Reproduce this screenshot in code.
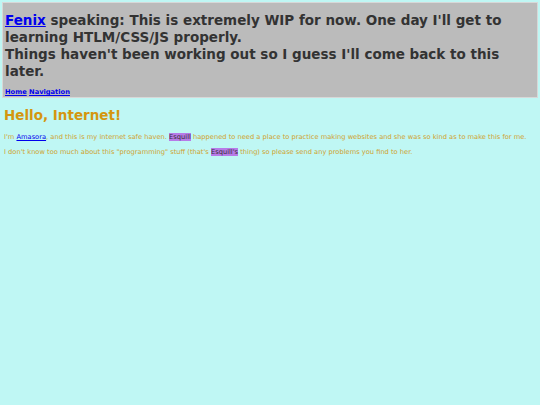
export default function App() {
  return (
    <div className="min-h-[405px] bg-[#bff7f4] p-[2px] font-['DejaVu_Sans',Verdana,sans-serif]">
      <header className="border border-[#d8d8d8] bg-[#bbbbbb] px-[2px] pt-[9px] pb-[1px]">
        <h1 className="text-[13.5px] leading-[17px] font-bold text-[#333333]">
          <a href="#" className="text-[#0000ee] underline">Fenix</a> speaking: This is extremely WIP for now. One day I'll get to learning HTLM/CSS/JS properly.
          <br />
          Things haven't been working out so I guess I'll come back to this later.
        </h1>
        <nav className="mt-[8px] text-[6.7px] leading-[8px] font-bold">
          <a href="#" className="text-[#0000ee] underline">Home</a>{" "}
          <a href="#" className="text-[#0000ee] underline">Navigation</a>
        </nav>
      </header>
      <main className="px-[2px] text-[#d0a22e]">
        <h2 className="mt-[9px] text-[13.5px] leading-[16px] font-bold text-[#d4960f]">Hello, Internet!</h2>
        <p className="mt-[10px] text-[6.7px] leading-[8px]">
          I'm <a href="#" className="text-[#0000ee] underline">Amasora</a>, and this is my internet safe haven.{" "}
          <span className="bg-[#b77be8] text-[#333333]">Esquill</span> happened to need a place to practice making websites and she was so kind as to make this for me.
        </p>
        <p className="mt-[7px] text-[6.7px] leading-[8px]">
          I don't know too much about this "programming" stuff (that's{" "}
          <span className="bg-[#b77be8] text-[#333333]">Esquill's</span> thing) so please send any problems you find to her.
        </p>
      </main>
    </div>
  );
}
